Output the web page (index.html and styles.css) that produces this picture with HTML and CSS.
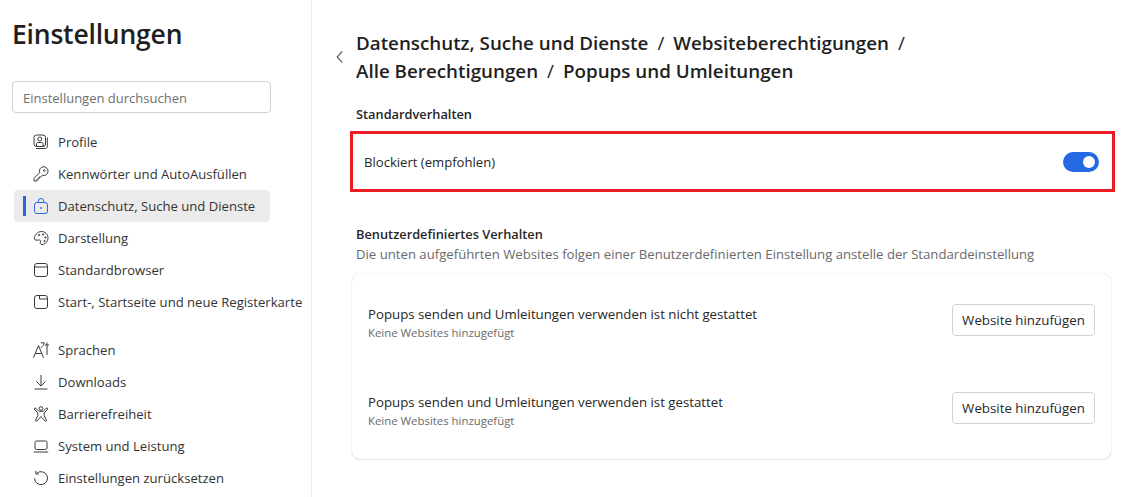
FILE: index.html
```html
<!DOCTYPE html>
<html lang="de">
<head>
<meta charset="utf-8">
<title>Einstellungen</title>
<link rel="stylesheet" href="styles.css">
</head>
<body>
<div class="app">
  <aside class="sidebar">
    <h1 class="app-title">Einstellungen</h1>
    <input class="search" type="text" placeholder="Einstellungen durchsuchen">
    <nav class="nav">
      <a class="nav-item"><svg class="icon" viewBox="0 0 16 16"><rect x="1" y="1" width="11.5" height="11.5" rx="2.5"/><circle cx="6.8" cy="5" r="2"/><path d="M3.5 12.3V10c0-1 .8-1.5 1.5-1.5h3.600c.8 0 1.500.6 1.500 1.500v2.300M14.300 3.500v9c0 1.200-.9 2-2 2H4M3 14.500h9"/></svg><span>Profile</span></a>
      <a class="nav-item"><svg class="icon" viewBox="0 0 16 16"><path d="M15 5.300a4.200 4.200 0 0 1-5.600 4L7.800 11H6v2H4v2H1v-2.700l5.700-5.700A4.300 4.300 0 1 1 15 5.300z"/><circle cx="11.300" cy="4.500" r=".8"/></svg><span>Kennwörter und AutoAusfüllen</span></a>
      <a class="nav-item is-active"><svg class="icon icon-active" viewBox="0 0 16 16"><rect x="1.500" y="4.500" width="13" height="11" rx="2.500"/><path d="M5.200 4.500V3.300a2.800 2.800 0 0 1 5.600 0v1.200"/><circle cx="8" cy="10" r=".6"/></svg><span>Datenschutz, Suche und Dienste</span></a>
      <a class="nav-item"><svg class="icon" viewBox="0 0 16 16"><path d="M8.500 1.500c3.700 0 6.500 2.800 6.500 6.300 0 3.600-2.800 6.700-6 6.700-1.800 0-2-1.300-1.600-2.400.5-1.400-.3-2.500-2-2.100-1.700.4-3.400.2-4-1-.8-2.900 3-7.500 7.100-7.500z"/><circle cx="6" cy="5" r=".7"/><circle cx="10" cy="4.500" r=".7"/><circle cx="12.500" cy="7.500" r=".7"/><circle cx="11.500" cy="11" r=".7"/></svg><span>Darstellung</span></a>
      <a class="nav-item"><svg class="icon" viewBox="0 0 16 16"><rect x="1.500" y="1.500" width="13" height="13" rx="2.500"/><path d="M1.500 5h13"/></svg><span>Standardbrowser</span></a>
      <a class="nav-item"><svg class="icon" viewBox="0 0 16 16"><rect x="1.500" y="1.500" width="13" height="13" rx="2.500"/><path d="M6.500 1.500V5h8"/></svg><span>Start-, Startseite und neue Registerkarte</span></a>
      <div class="nav-gap"></div>
      <a class="nav-item"><svg class="icon" viewBox="0 0 16 16"><path d="M.5 15.800 5.500 3.500l5 12.300M2.300 11.500h6.400M7.800.8h3.400c.4 2-1.500 3-3.200 5M14 .5v12.500M12 3h4"/></svg><span>Sprachen</span></a>
      <a class="nav-item"><svg class="icon" viewBox="0 0 16 16"><path d="M8 1v10.500M3.500 7.500 8 12l4.500-4.500M1.500 15h13"/></svg><span>Downloads</span></a>
      <a class="nav-item"><svg class="icon" viewBox="0 0 16 16"><circle cx="8" cy="2.500" r="1.800"/><path d="M2.300 1.800 5.800 5.300h4.400l3.500-3.500 1.200 1.100-3.700 4v2.600l2.300 4.700c.3 1-.9 1.500-1.400.8L8 10.500 3.900 15c-.5.700-1.700.2-1.400-.8l2.300-4.700V6.900L1.100 2.900z"/></svg><span>Barrierefreiheit</span></a>
      <a class="nav-item"><svg class="icon" viewBox="0 0 16 16"><rect x="2" y="3" width="12" height="8.500" rx="1.500"/><path d="M.8 14h14.400"/></svg><span>System und Leistung</span></a>
      <a class="nav-item"><svg class="icon" viewBox="0 0 16 16"><path d="M3.800 3.200a6.500 6.500 0 1 1-2.300 5M2.800 1v3h3"/></svg><span>Einstellungen zurücksetzen</span></a>
    </nav>
  </aside>
  <main class="main">
    <header class="page-head">
      <button class="back" aria-label="Zurück"><svg viewBox="0 0 10 14"><path d="M7 2 2.500 7 7 12"/></svg></button>
      <h2 class="crumbs">Datenschutz, Suche und Dienste<span class="sep">/</span>Websiteberechtigungen<span class="sep">/</span><br>Alle Berechtigungen<span class="sep">/</span>Popups und Umleitungen</h2>
    </header>
    <h3 class="section-title">Standardverhalten</h3>
    <div class="highlight">
      <div class="toggle-card">
        <span class="body-text status">Blockiert (empfohlen)</span>
        <span class="toggle"></span>
      </div>
    </div>
    <h3 class="section-title custom">Benutzerdefiniertes Verhalten</h3>
    <p class="section-desc">Die unten aufgeführten Websites folgen einer Benutzerdefinierten Einstellung anstelle der Standardeinstellung</p>
    <section class="card">
      <div class="row">
        <div class="row-text">
          <div class="body-text">Popups senden und Umleitungen verwenden ist nicht gestattet</div>
          <div class="sub">Keine Websites hinzugefügt</div>
        </div>
        <button class="btn">Website hinzufügen</button>
      </div>
      <div class="row">
        <div class="row-text">
          <div class="body-text">Popups senden und Umleitungen verwenden ist gestattet</div>
          <div class="sub">Keine Websites hinzugefügt</div>
        </div>
        <button class="btn">Website hinzufügen</button>
      </div>
    </section>
  </main>
</div>
</body>
</html>
```
FILE: styles.css
```css
* { box-sizing: border-box; }
html, body { margin: 0; height: 100%; overflow: hidden; background: #fff; }
body { font-family: "Open Sans", "Noto Sans", sans-serif; color: #262626; font-size: 13px; }
.app { display: flex; height: 497px; }
.sidebar { width: 312px; flex: none; border-right: 1px solid #ececec; padding: 15px 0 0 12px; overflow: hidden; }
.app-title { margin: 0 0 28px; font-size: 26.5px; line-height: 38px; font-weight: 600; color: #1f1f1f; letter-spacing: -.2px; }
.search { display: block; width: 259px; height: 32px; border: 1px solid #d1d1d1; border-radius: 4px; padding: 1px 10px 0; font: 13px "Open Sans", sans-serif; background: #fff; outline: none; }
.search::placeholder { color: #6f6f6f; opacity: 1; }
.nav { margin-top: 13px; display: flex; flex-direction: column; }
.nav-item { position: relative; display: flex; align-items: center; gap: 9px; width: 256px; height: 32px; margin-left: 2px; padding-left: 19px; font-size: 13.1px; color: #333; white-space: nowrap; border-radius: 4px; }
.nav-item.is-active { background: #ebebeb; }
.nav-item.is-active::before { content: ""; position: absolute; left: 9px; top: 6px; width: 3px; height: 20px; background: #2b66e0; }
.nav-gap { height: 16px; flex: none; }
.icon { width: 16px; height: 16px; flex: none; fill: none; stroke: #3a3a3a; stroke-width: 1; }
.icon-active { stroke: #2b66e0; }
.main { flex: 1; padding: 29px 22px 0 39px; min-width: 0; }
.page-head { position: relative; padding-left: 5px; }
.back { position: absolute; left: -17px; top: 20px; width: 12px; height: 16px; padding: 0; border: 0; background: none; }
.back svg { display: block; width: 12px; height: 16px; fill: none; stroke: #555; stroke-width: 1; }
.crumbs { margin: 0; font-size: 18.8px; line-height: 28px; font-weight: 600; color: #1f1f1f; }
.sep { margin: 0 9px; font-weight: 400; }
.section-title { margin: 19px 0 0 5px; font-size: 12.8px; line-height: 20px; font-weight: 600; color: #262626; }
.highlight { margin: 7px 0 0 -1px; width: 765px; height: 61px; border: 3px solid #ed1c24; background: #fff; }
.toggle-card { height: 100%; display: flex; align-items: center; justify-content: space-between; padding: 0 13px 0 11px; }
.toggle { position: relative; width: 36px; height: 20px; border-radius: 10px; background: #2468e4; }
.toggle::after { content: ""; position: absolute; right: 4px; top: 4px; width: 12px; height: 12px; border-radius: 50%; background: #fff; }
.section-title.custom { margin-top: 32px; }
.section-desc { margin: 0 0 0 5px; font-size: 13.17px; line-height: 20px; color: #6a6a6a; white-space: nowrap; }
.card { margin: 10px 0 0 1px; width: 759px; height: 185px; border-radius: 8px; box-shadow: 0 0 1px rgba(0,0,0,.22), 0 1px 2px rgba(0,0,0,.1); padding: 2px 16px 0; display: flex; flex-direction: column; }
.row { height: 88px; display: flex; align-items: center; justify-content: space-between; }
.row-text { padding-top: 5px; }
.body-text { font-size: 13.25px; line-height: 20px; color: #262626; }
.status { font-size: 13.1px; }
.sub { font-size: 11.4px; line-height: 17px; color: #6a6a6a; }
.btn { width: 143px; height: 32px; padding: 0; background: #fff; border: 1px solid #d1d1d1; border-radius: 4px; font: 13.3px "Open Sans", sans-serif; color: #262626; }
```
